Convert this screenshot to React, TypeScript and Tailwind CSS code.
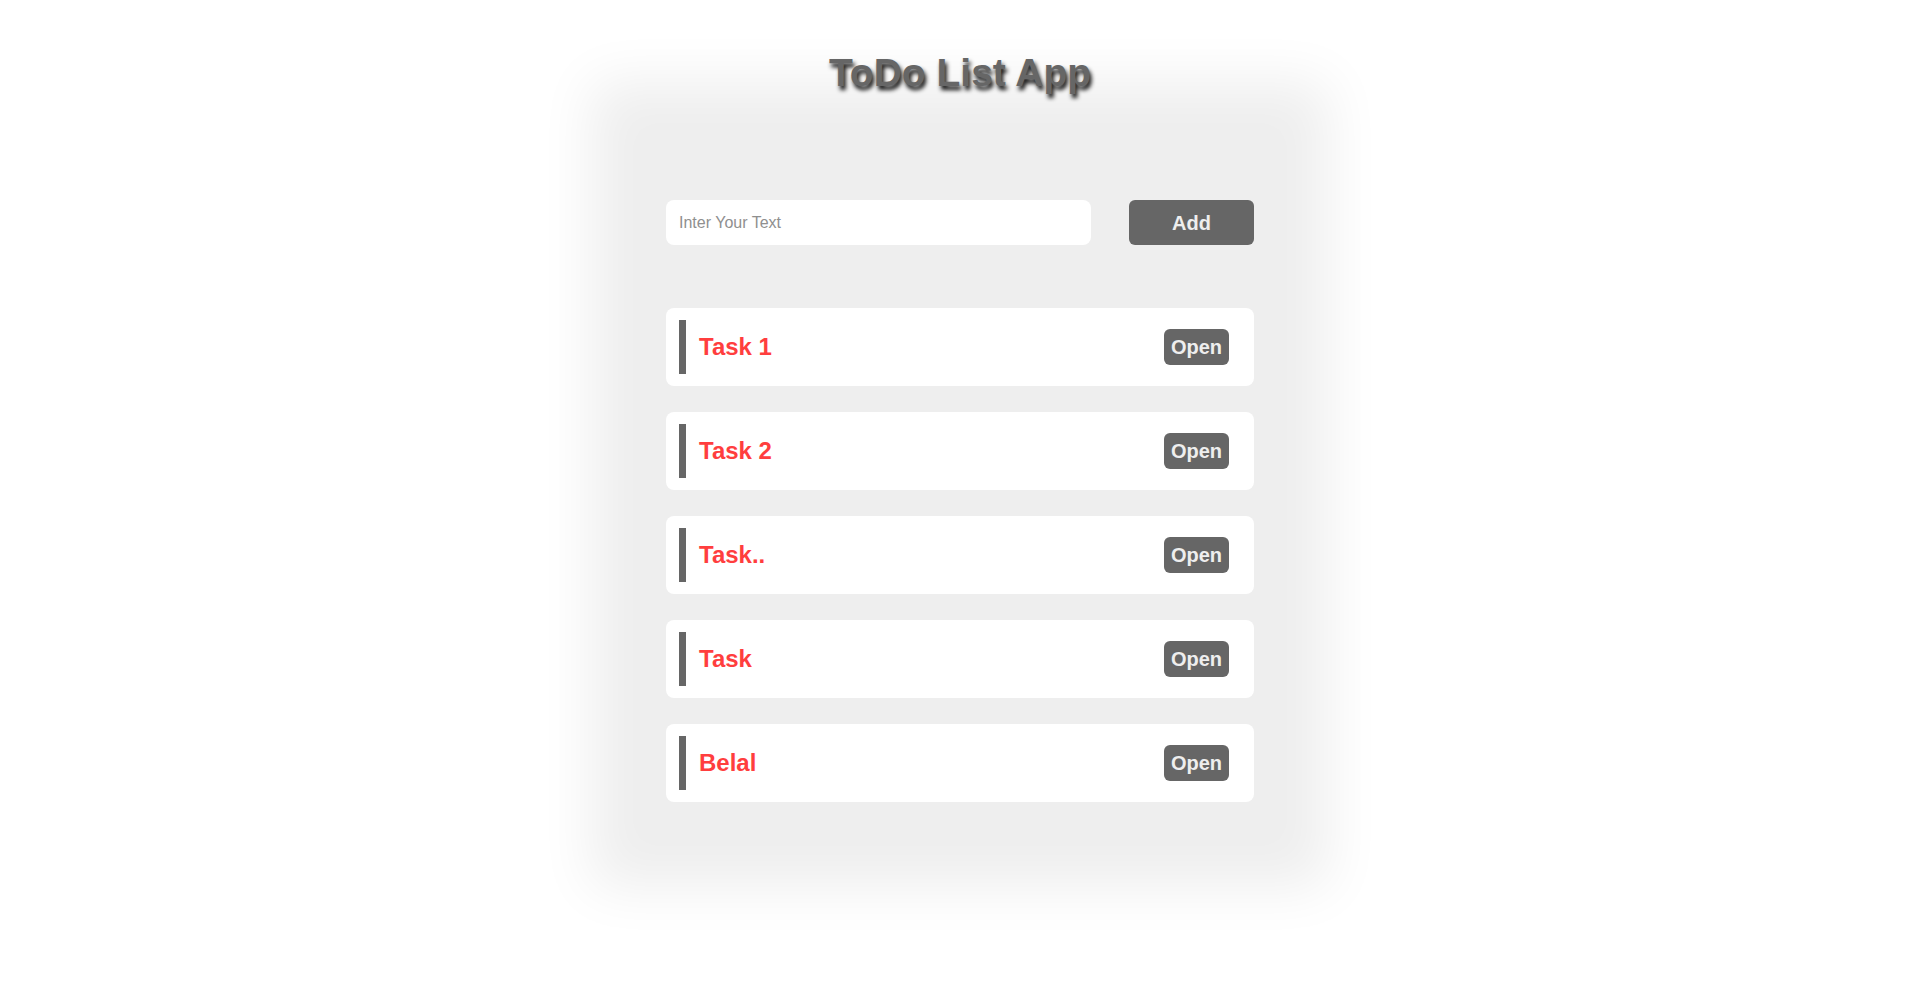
import React, { useState } from 'react';

type Task = {
    id: number;
    title: string;
};

const initialTasks: Task[] = [
    { id: 1, title: 'Task 1' },
    { id: 2, title: 'Task 2' },
    { id: 3, title: 'Task..' },
    { id: 4, title: 'Task' },
    { id: 5, title: 'Belal' },
];

const App: React.FC = () => {
    const [tasks, setTasks] = useState<Task[]>(initialTasks);
    const [text, setText] = useState('');

    const addTask = () => {
        if (!text.trim()) return;
        setTasks([...tasks, { id: Date.now(), title: text.trim() }]);
        setText('');
    };

    return (
        <div className="min-h-[983px] bg-white flex flex-col items-center font-['Liberation_Sans',Arial,sans-serif] overflow-hidden">
            <h1 className="relative z-10 mt-[53px] text-[39px] leading-none font-bold text-[#666] [text-shadow:2px_4px_4px_#111]">
                ToDo List App
            </h1>

            <div className="mt-[38px] w-[640px] bg-[#eee] px-[26px] pt-[70px] pb-[37px] shadow-[0_0_52px_48px_#eee]">
                <div className="flex justify-between">
                    <input
                        type="text"
                        value={text}
                        onChange={(e) => setText(e.target.value)}
                        placeholder="Inter Your Text"
                        className="w-[425px] h-[45px] rounded-[8px] bg-white px-[13px] text-[16px] text-[#333] outline-none placeholder:text-[#8f8f8f]"
                    />
                    <button
                        onClick={addTask}
                        className="w-[125px] h-[45px] rounded-[6px] border-0 bg-[#666] text-[20px] font-bold text-[#eee]"
                    >
                        Add
                    </button>
                </div>

                <ul className="mt-[63px] flex flex-col gap-[26px]">
                    {tasks.map((task) => (
                        <li
                            key={task.id}
                            className="h-[78px] rounded-[8px] bg-white flex items-center pl-[13px] pr-[25px]"
                        >
                            <span className="w-[7px] h-[54px] bg-[#666]" />
                            <h2 className="ml-[13px] flex-1 text-[24px] font-bold text-[#ff3e3e]">{task.title}</h2>
                            <button className="h-[36px] px-[7px] rounded-[6px] border-0 bg-[#666] text-[20px] font-bold text-[#eee]">
                                Open
                            </button>
                        </li>
                    ))}
                </ul>
            </div>
        </div>
    );
};

export default App;
